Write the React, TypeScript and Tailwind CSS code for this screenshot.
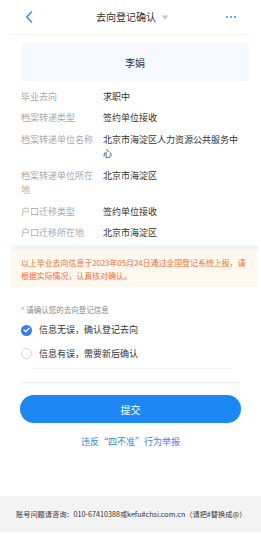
import React from "react";

const rows: [string, string][] = [
  ["毕业去向", "求职中"],
  ["档案转递类型", "签约单位接收"],
  ["档案转递单位名称", "北京市海淀区人力资源公共服务中心"],
  ["档案转递单位所在地", "北京市海淀区"],
  ["户口迁移类型", "签约单位接收"],
  ["户口迁移所在地", "北京市海淀区"],
];

export default function App() {
  return (
    <div
      className="w-[261px] h-[535px] bg-white overflow-hidden flex flex-col"
      style={{ fontFamily: '"Noto Sans CJK SC", "Noto Sans", sans-serif' }}
    >
      {/* header */}
      <div className="mx-[11px] h-[35px] flex items-center justify-between border-b border-[#f3f3f3] px-[14px]">
        <svg width="8" height="12" viewBox="0 0 8 12">
          <path d="M6.5 1 L1.8 6 L6.5 11" fill="none" stroke="#3d8af7" strokeWidth="1.6" strokeLinecap="round" strokeLinejoin="round" />
        </svg>
        <div className="flex items-center gap-[5px] pl-[6px]">
          <span className="text-[10px] text-[#333] leading-none">去向登记确认</span>
          <svg width="8" height="5" viewBox="0 0 8 5">
            <path d="M0.5 0.5 L7.5 0.5 L4 4.5 Z" fill="#c8c8c8" />
          </svg>
        </div>
        <div className="flex gap-[2px]">
          <span className="w-[2px] h-[2px] bg-[#3d8af7] rounded-full" />
          <span className="w-[2px] h-[2px] bg-[#3d8af7] rounded-full" />
          <span className="w-[2px] h-[2px] bg-[#3d8af7] rounded-full" />
        </div>
      </div>

      {/* name */}
      <div className="mt-[8px] mx-[21px] w-[228px] h-[38px] bg-[#f5f9ff] flex items-center justify-center text-[10px] text-[#333]">
        李娟
      </div>

      {/* info */}
      <div className="mt-[5px] pl-[21px] pr-[14px] flex flex-col">
        {rows.map(([k, v]) => (
          <div key={k} className="flex py-[3.5px] text-[9px] leading-[14.5px]">
            <div className="w-[82px] shrink-0 pr-[6px] text-[#aaa]">{k}</div>
            <div className="flex-1 text-[#333] pr-[4px]">{v}</div>
          </div>
        ))}
      </div>

      {/* separator + alert */}
      <div className="mt-[1px] ml-[11px] mr-[3px] h-[5px] bg-[#f1f4f7]" />
      <div className="ml-[11px] mr-[3px] bg-[#fff8ef] pl-[10px] pr-[6px] pt-[7px] pb-[5px] text-[8px] leading-[12.5px] text-[#f0703a] tracking-[-0.1px]">
        以上毕业去向信息于2023年05月24日通过全国登记系统上报，请根据实际情况，认真核对确认。
      </div>

      {/* confirm */}
      <div className="mt-[18px] pl-[21px] text-[7.5px] text-[#888] leading-[10px]">
        <span className="text-[#f56c6c]">*</span> 请确认您的去向登记信息
      </div>
      <div className="mx-[21px] flex flex-col">
        <div className="flex items-center gap-[7px] h-[24px] mt-[3px]">
          <span className="w-[11px] h-[11px] rounded-full bg-[#2f7ff0] flex items-center justify-center">
            <svg width="7" height="6" viewBox="0 0 7 6">
              <path d="M1 3 L2.8 4.8 L6 1.2" fill="none" stroke="white" strokeWidth="1.3" strokeLinecap="round" strokeLinejoin="round" />
            </svg>
          </span>
          <span className="text-[9px] text-[#333]">信息无误，确认登记去向</span>
        </div>
        <div className="flex items-center gap-[7px] h-[23px]">
          <span className="w-[11px] h-[11px] rounded-full border border-[#d5d5d5] bg-white" />
          <span className="text-[9px] text-[#333]">信息有误，需要新后确认</span>
        </div>
        <div className="ml-[11px] mr-[9px] mt-[3px] border-b border-[#f0f0f0]" />
        <div className="mt-[13px] border-b border-[#eeeeee]" />
      </div>

      {/* button */}
      <div className="mt-[12px] mx-[20px] h-[28px] rounded-full bg-[#1d87f3] flex items-center justify-center text-[10px] text-white">
        提交
      </div>
      <div className="mt-[13px] text-center text-[9px] text-[#3b86e8] leading-[12px]">
        违反“四不准”行为举报
      </div>

      {/* footer */}
      <div className="mt-auto mb-[3px] h-[36px] bg-[#f3f3f3] flex items-center pl-[16px] text-[7.2px] text-[#333] whitespace-nowrap">
        账号问题请咨询：010-67410388或kefu#chsi.com.cn（请把#替换成@）
      </div>
    </div>
  );
}
